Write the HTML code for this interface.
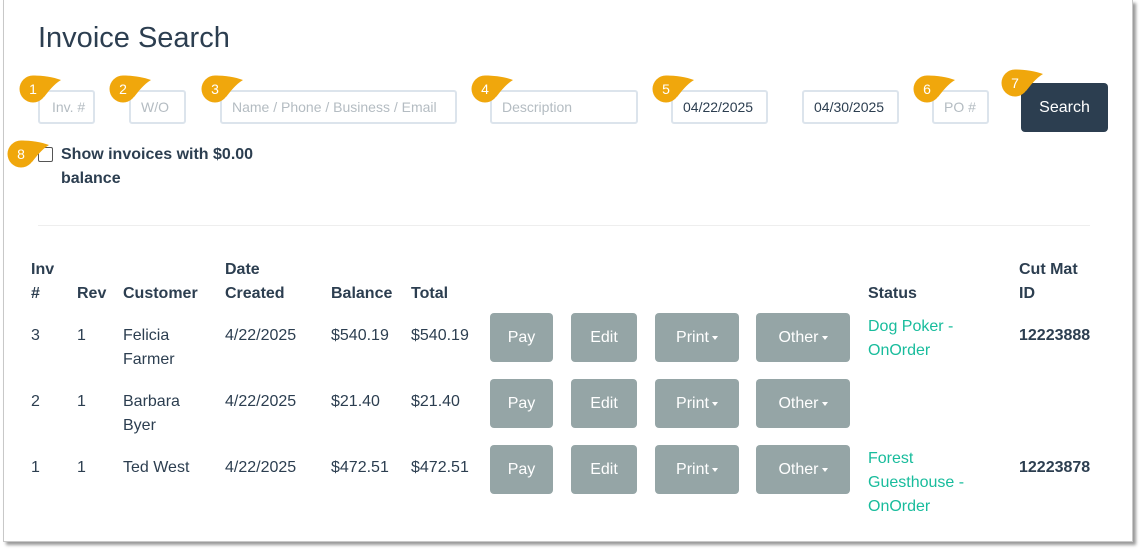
<!DOCTYPE html>
<html><head><style>
body{margin:0;width:1142px;height:550px;background:#fff;position:relative;overflow:hidden;font-family:"Liberation Sans",sans-serif;color:#2c3e50}
.frame{position:absolute;left:3px;top:0;width:1128px;height:541px;border:1px solid #c8c8c8;border-top:none;box-shadow:3px 3px 3px #9a9a9a;background:#fff}
.a{position:absolute;white-space:nowrap}
.in{position:absolute;height:34px;border:2px solid #dce4ec;border-radius:3px;box-sizing:border-box;font-size:14px;line-height:31px;padding-left:10px;color:#b4bcc2;overflow:hidden;white-space:nowrap}
.dt{color:#2c3e50}
.b{position:absolute;background:#95a5a6;color:#fff;border-radius:4px;font-size:16px;text-align:center;height:49px;line-height:49px}
.t{position:absolute;font-size:16px;line-height:24px}
.h{font-weight:bold}
.g{color:#18bc9c}
.car{display:inline-block;border-top:4px solid #fff;border-left:3.5px solid transparent;border-right:3.5px solid transparent;vertical-align:middle;margin-left:3px}
svg.bd{position:absolute}
</style></head><body>
<div class="frame"></div>
<div class="a" style="left:38px;top:22px;font-size:29px">Invoice Search</div>
<div class="in" style="left:38px;top:90px;width:57px;padding-left:12px">Inv. #</div>
<div class="in" style="left:129px;top:90px;width:57px">W/O</div>
<div class="in" style="left:220px;top:90px;width:237px">Name / Phone / Business / Email</div>
<div class="in" style="left:490px;top:90px;width:148px">Description</div>
<div class="in dt" style="left:671px;top:90px;width:97px">04/22/2025</div>
<div class="in dt" style="left:802px;top:90px;width:97px">04/30/2025</div>
<div class="in" style="left:932px;top:90px;width:57px">PO #</div>
<div class="a" style="left:1021px;top:83px;width:87px;height:49px;background:#2c3e50;color:#fff;border-radius:4px;text-align:center;line-height:49px;font-size:16px">Search</div>
<div class="a" style="left:38px;top:147px;width:13px;height:13px;border:1px solid #555;border-radius:2px"></div>
<div class="t h" style="left:61px;top:143px">Show invoices with $0.00<br>balance</div>
<div class="a" style="left:38px;top:225px;width:1052px;height:1px;background:#eee"></div>

<div class="t h" style="left:31px;top:258px">Inv<br>#</div>
<div class="t h" style="left:77px;top:282px">Rev</div>
<div class="t h" style="left:123px;top:282px">Customer</div>
<div class="t h" style="left:225px;top:258px">Date<br>Created</div>
<div class="t h" style="left:331px;top:282px">Balance</div>
<div class="t h" style="left:411px;top:282px">Total</div>
<div class="t h" style="left:868px;top:282px">Status</div>
<div class="t h" style="left:1019px;top:258px">Cut Mat<br>ID</div>

<div class="t" style="left:31px;top:324px">3</div><div class="t" style="left:77px;top:324px">1</div>
<div class="t" style="left:123px;top:324px">Felicia<br>Farmer</div><div class="t" style="left:225px;top:324px">4/22/2025</div>
<div class="t" style="left:331px;top:324px">$540.19</div><div class="t" style="left:411px;top:324px">$540.19</div>
<div class="t g" style="left:868px;top:315px">Dog Poker -<br>OnOrder</div><div class="t h" style="left:1019px;top:324px">12223888</div>

<div class="t" style="left:31px;top:390px">2</div><div class="t" style="left:77px;top:390px">1</div>
<div class="t" style="left:123px;top:390px">Barbara<br>Byer</div><div class="t" style="left:225px;top:390px">4/22/2025</div>
<div class="t" style="left:331px;top:390px">$21.40</div><div class="t" style="left:411px;top:390px">$21.40</div>

<div class="t" style="left:31px;top:456px">1</div><div class="t" style="left:77px;top:456px">1</div>
<div class="t" style="left:123px;top:456px">Ted West</div><div class="t" style="left:225px;top:456px">4/22/2025</div>
<div class="t" style="left:331px;top:456px">$472.51</div><div class="t" style="left:411px;top:456px">$472.51</div>
<div class="t g" style="left:868px;top:447px">Forest<br>Guesthouse -<br>OnOrder</div><div class="t h" style="left:1019px;top:456px">12223878</div>

<div class="b" style="left:490px;top:313px;width:63px">Pay</div>
<div class="b" style="left:571px;top:313px;width:66px">Edit</div>
<div class="b" style="left:655px;top:313px;width:84px">Print<span class="car"></span></div>
<div class="b" style="left:756px;top:313px;width:94px">Other<span class="car"></span></div>
<div class="b" style="left:490px;top:379px;width:63px">Pay</div>
<div class="b" style="left:571px;top:379px;width:66px">Edit</div>
<div class="b" style="left:655px;top:379px;width:84px">Print<span class="car"></span></div>
<div class="b" style="left:756px;top:379px;width:94px">Other<span class="car"></span></div>
<div class="b" style="left:490px;top:445px;width:63px">Pay</div>
<div class="b" style="left:571px;top:445px;width:66px">Edit</div>
<div class="b" style="left:655px;top:445px;width:84px">Print<span class="car"></span></div>
<div class="b" style="left:756px;top:445px;width:94px">Other<span class="car"></span></div>

<svg class="bd" style="left:0;top:0" width="1142" height="200">
<defs><g id="p" fill="#f0a70c"><circle cx="16" cy="14" r="13.5"/><path d="M16,0.5 C26,0.5 36,2 44,5 C36,10 32,16 27,22 Z"/></g></defs>
<g font-family="Liberation Sans" font-size="14" fill="#fff" text-anchor="middle">
<use href="#p" x="17" y="75"/><text x="33" y="94">1</text>
<use href="#p" x="107" y="75"/><text x="123" y="94">2</text>
<use href="#p" x="199" y="75"/><text x="215" y="94">3</text>
<use href="#p" x="469" y="75"/><text x="485" y="94">4</text>
<use href="#p" x="650" y="75"/><text x="666" y="94">5</text>
<use href="#p" x="911" y="75"/><text x="927" y="94">6</text>
<use href="#p" x="999" y="69"/><text x="1015" y="88">7</text>
<use href="#p" x="5" y="140"/><text x="21" y="159">8</text>
</g></svg>
</body></html>
